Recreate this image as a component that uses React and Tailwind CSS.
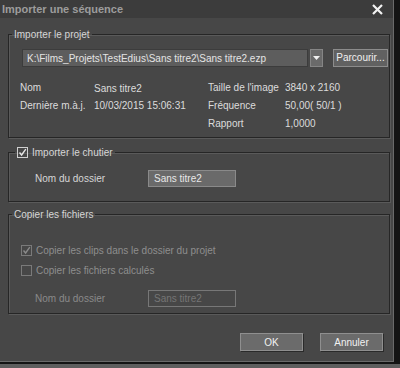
const font = { fontFamily: '"Liberation Sans", Arial, sans-serif' };

const Check = ({ checked, disabled }) => (
  <span
    className={`inline-flex w-[11px] h-[11px] shrink-0 items-center justify-center border ${
      disabled ? 'border-[#7a7a7a]' : 'border-[#d0d0d0]'
    }`}
  >
    {checked && (
      <svg width="9" height="9" viewBox="0 0 9 9">
        <path
          d="M1.5 4.5 L3.6 7 L7.8 1.2"
          fill="none"
          stroke={disabled ? '#8a8a8a' : '#e6e6e6'}
          strokeWidth="1.4"
        />
      </svg>
    )}
  </span>
);

const boxCls = 'border border-[#262626] shadow-[inset_1px_1px_0_#5a5a5a,1px_1px_0_#5a5a5a]';

export default function App() {
  return (
    <div className="w-[400px] h-[368px] bg-[#141414] overflow-hidden text-[10px]" style={font}>
      <div className="flex">
        <div className="w-[394px] h-[362px] bg-[#474747] flex flex-col border-r border-b border-[#6a6a6a]">
          {/* title bar */}
          <div className="h-[18px] bg-[#3c3c3c] flex items-center justify-between pl-[2px] pr-[10px]">
            <span className="text-[11px] font-bold text-[#9c9c9c]">Importer une séquence</span>
            <svg width="11" height="11" viewBox="0 0 11 11">
              <path d="M1 1 L10 10 M10 1 L1 10" stroke="#f2f2f2" strokeWidth="2.2" />
            </svg>
          </div>

          <div className="flex flex-col pl-[8px] pr-[3px]">
            <fieldset className={`mt-[10px] h-[110px] ${boxCls}`}>
              <legend className="ml-[3px] px-[2px] leading-[13px] text-[#d6d6d6]">Importer le projet</legend>
              <div className="pl-[13px]">
                <div className="flex items-center mt-[8px] h-[18px]">
                  <div className="w-[286px] h-[18px] bg-[#5d5d5d] border border-[#3c3c3c] flex items-center pl-[4px] text-[#e4e4e4] whitespace-nowrap overflow-hidden">
                    K:\Films_Projets\TestEdius\Sans titre2\Sans titre2.ezp
                  </div>
                  <div className="ml-[2px] w-[13px] h-[18px] bg-[#6a6a6a] border border-[#858585] flex items-center justify-center">
                    <svg width="7" height="4" viewBox="0 0 7 4">
                      <path d="M0 0 L7 0 L3.5 4 Z" fill="#f0f0f0" />
                    </svg>
                  </div>
                  <button className="ml-[10px] w-[55px] h-[18px] bg-[#616161] border border-[#8c8c8c] text-[#f0f0f0] leading-none">
                    Parcourir...
                  </button>
                </div>
                <div className="grid grid-cols-[72px_114px_77px_1fr] mt-[11px] text-[#dcdcdc]">
                  <div className="h-[18px] flex items-center -ml-[2px]">Nom</div>
                  <div className="h-[18px] flex items-center pt-[2px]">Sans titre2</div>
                  <div className="h-[18px] flex items-center">Taille de l'image</div>
                  <div className="h-[18px] flex items-center pt-[1px]">3840 x 2160</div>
                  <div className="h-[18px] flex items-center -ml-[2px]">Dernière m.à.j.</div>
                  <div className="h-[18px] flex items-center pt-[1px]">10/03/2015 15:06:31</div>
                  <div className="h-[18px] flex items-center">Fréquence</div>
                  <div className="h-[18px] flex items-center pt-[1px]">50,00( 50/1 )</div>
                  <div className="h-[18px]" />
                  <div className="h-[18px]" />
                  <div className="h-[18px] flex items-center">Rapport</div>
                  <div className="h-[18px] flex items-center pt-[1px]">1,0000</div>
                </div>
              </div>
            </fieldset>

            <fieldset className={`mt-[8px] h-[56px] ${boxCls}`}>
              <legend className="ml-[6px] px-[2px] leading-[13px] text-[#d6d6d6] flex items-center gap-[4px]">
                <Check checked />
                <span>Importer le chutier</span>
              </legend>
              <div className="flex items-center mt-[11px] pl-[26px]">
                <span className="w-[113px] text-[#d6d6d6]">Nom du dossier</span>
                <div className="w-[88px] h-[17px] bg-[#6a6a6a] border border-[#8a8a8a] flex items-center pl-[5px] text-[#e8e8e8]">
                  Sans titre2
                </div>
              </div>
            </fieldset>

            <fieldset className={`mt-[6px] h-[106px] ${boxCls}`}>
              <legend className="ml-[3px] px-[2px] leading-[13px] text-[#d6d6d6]">Copier les fichiers</legend>
              <div className="flex flex-col mt-[19px] pl-[12px]">
                <div className="h-[20px] flex items-center gap-[4px] text-[#8e8e8e]">
                  <Check checked disabled />
                  <span>Copier les clips dans le dossier du projet</span>
                </div>
                <div className="h-[20px] flex items-center gap-[4px] text-[#8e8e8e]">
                  <Check disabled />
                  <span>Copier les fichiers calculés</span>
                </div>
                <div className="flex items-center mt-[10px] pl-[14px]">
                  <span className="w-[113px] text-[#8a8a8a]">Nom du dossier</span>
                  <div className="w-[88px] h-[17px] border border-[#777777] flex items-center pl-[5px] text-[#757575]">
                    Sans titre2
                  </div>
                </div>
              </div>
            </fieldset>
          </div>

          <div className="flex justify-end gap-[17px] mt-[19px] pr-[10px]">
            <button className="w-[63px] h-[18px] bg-[#6b6b6b] border border-[#8f8f8f] shadow-[1px_1px_0_#2a2a2a] text-[#f2f2f2]">
              OK
            </button>
            <button className="w-[63px] h-[18px] bg-[#6b6b6b] border border-[#8f8f8f] shadow-[1px_1px_0_#2a2a2a] text-[#f2f2f2]">
              Annuler
            </button>
          </div>
        </div>
      </div>
      <div className="mt-[2px] h-[4px] bg-[#5e5e5e]" />
    </div>
  );
}
